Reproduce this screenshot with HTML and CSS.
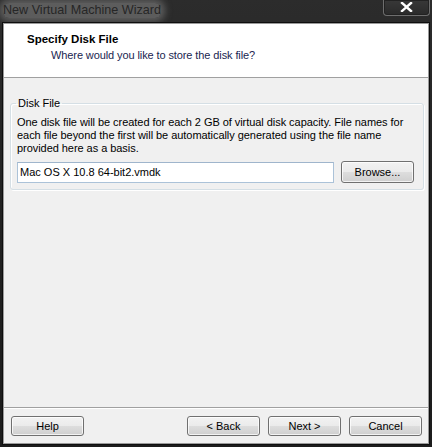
FILE: index.html
```html
<!DOCTYPE html>
<html>
<head>
<meta charset="utf-8">
<link rel="stylesheet" href="styles.css">
</head>
<body>
<div class="window">
  <div class="titlebar">
    <span class="wtitle">New Virtual Machine Wizard</span>
    <button class="close" aria-label="Close">
      <svg width="13" height="10" viewBox="0 0 13 10"><path d="M2 1 L11 9 M11 1 L2 9" stroke="#fff" stroke-width="2.4" stroke-linecap="square"/></svg>
    </button>
  </div>
  <div class="client">
    <div class="header">
      <div class="h-title">Specify Disk File</div>
      <div class="h-sub">Where would you like to store the disk file?</div>
    </div>
    <div class="content">
      <fieldset class="group">
        <legend>Disk File</legend>
        <p class="desc">One disk file will be created for each 2 GB of virtual disk capacity. File names for each file beyond the first will be automatically generated using the file name provided here as a basis.</p>
        <div class="row">
          <input class="field" type="text" value="Mac OS X 10.8 64-bit2.vmdk">
          <button class="btn browse">Browse...</button>
        </div>
      </fieldset>
    </div>
    <div class="footer">
      <button class="btn">Help</button>
      <div class="spacer"></div>
      <button class="btn">&lt; Back</button>
      <button class="btn">Next &gt;</button>
      <button class="btn">Cancel</button>
    </div>
  </div>
</div>
</body>
</html>
```
FILE: styles.css
```css
* { box-sizing: border-box; }
html, body { margin: 0; padding: 0; }
body {
  background: #1b1b1b;
  font-family: "Liberation Sans", Arial, sans-serif;
  font-size: 11px;
  color: #000;
}
.window {
  width: 432px;
  height: 447px;
  display: flex;
  flex-direction: column;
  background: linear-gradient(#2c2c2c, #222 40%, #1c1c1c);
  padding: 0 3px 3px 2px;
  overflow: hidden;
}
.titlebar {
  height: 23px;
  display: flex;
  align-items: flex-start;
  justify-content: space-between;
  flex: none;
}
.wtitle {
  font-family: "Liberation Sans", Arial, sans-serif;
  font-size: 12.6px;
  line-height: 15px;
  color: #262626;
  margin-top: 3px;
  margin-left: 1px;
  background: rgba(110,110,110,0.75);
  box-shadow: 0 0 7px 4px rgba(110,110,110,0.75);
  border-radius: 6px;
}
.close {
  width: 47px;
  height: 16px;
  margin-right: -1px;
  border: 1px solid #6e6e6e;
  border-top: none;
  border-radius: 0 0 4px 4px;
  background: linear-gradient(#383838, #2a2a2a);
  box-shadow: inset 0 0 0 1px #222;
  padding: 0 0 2px 0;
  display: flex;
  align-items: center;
  justify-content: center;
}
.client {
  flex: 1;
  display: flex;
  flex-direction: column;
  background: #f0f0f0;
  border: 1px solid #9a9a9a;
  box-shadow: 0 0 0 1px #0e0e0e;
  margin-left: 1px;
  position: relative;
}
.header {
  height: 54px;
  background: #fff;
  border-bottom: 1px solid #a0a0a0;
  padding: 8px 0 0 23px;
  flex: none;
}
.h-title {
  font-weight: bold;
  font-size: 11.5px;
  line-height: 14px;
}
.h-sub {
  margin-top: 2px;
  padding-left: 24px;
  color: #1a2550;
  line-height: 14px;
  letter-spacing: -0.1px;
}
.content {
  flex: 1;
  padding: 19px 6px 0 6px;
}
.group {
  margin: 0;
  border: 1px solid #d5dfe5;
  border-radius: 3px;
  padding: 0 9px 6px 6px;
  box-shadow: inset 1px 1px 0 #fff, 1px 1px 0 #fff;
}
.group legend {
  padding: 0 2px;
  margin-left: -1px;
  line-height: 13px;
}
.desc {
  margin: 6px 0 0 0;
  line-height: 13px;
  letter-spacing: -0.05px;
}
.row {
  display: flex;
  align-items: center;
  margin-top: 6px;
  gap: 7px;
}
.field {
  width: 317px;
  height: 21px;
  border: 1px solid #abc2d8;
  border-top-color: #9fb5cc;
  font-family: inherit;
  font-size: 11px;
  padding: 0 2px;
  background: #fff;
  color: #000;
  margin: 0;
}
.btn {
  width: 73px;
  height: 20px;
  font-family: inherit;
  font-size: 11px;
  color: #000;
  border: 1px solid #707070;
  border-radius: 3px;
  background: linear-gradient(#f2f2f2 0%, #ebebeb 48%, #dddddd 52%, #cfcfcf 100%);
  box-shadow: inset 0 0 0 1px rgba(255,255,255,0.75);
  padding: 0;
  margin: 0;
}
.browse { height: 22px; }
.footer {
  flex: none;
  height: 36px;
  border-top: 1px solid #a0a0a0;
  box-shadow: inset 0 1px 0 #fff;
  display: flex;
  align-items: flex-start;
  padding: 8px 6px 0 7px;
  gap: 8px;
}
.spacer { flex: 1; }
```
